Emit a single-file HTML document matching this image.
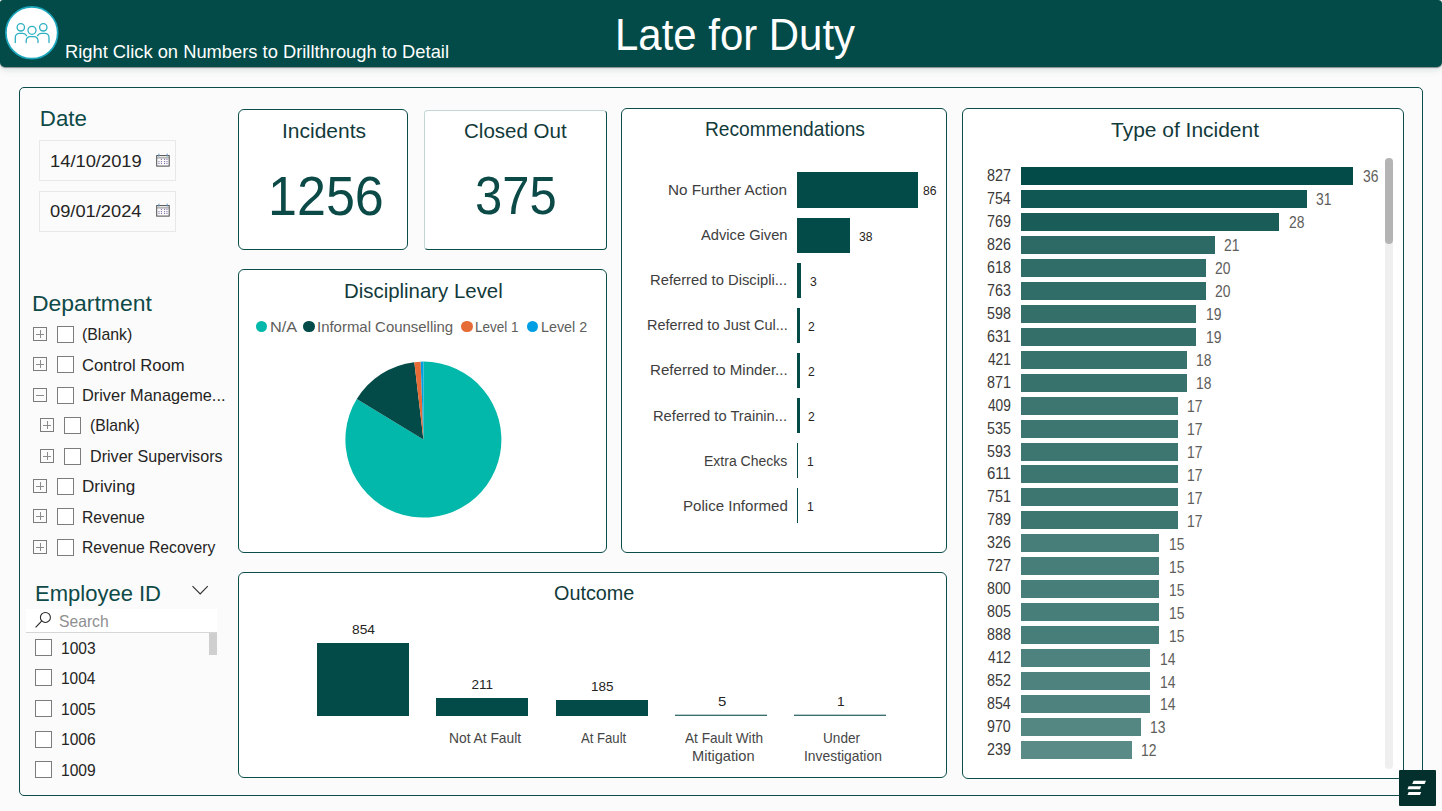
<!DOCTYPE html>
<html><head><meta charset="utf-8"><title>Late for Duty</title>
<style>
html,body{margin:0;padding:0;}
body{width:1442px;height:811px;position:relative;overflow:hidden;background:#FBFBFB;font-family:"Liberation Sans",sans-serif;}
.t{position:absolute;white-space:nowrap;}
</style></head><body>
<div style="position:absolute;left:0px;top:0px;width:1442px;height:67px;background:#024B48;border-radius:3px 4px 5px 5px;box-shadow:0 1px 1px rgba(30,30,30,0.45),0 3px 7px rgba(0,60,60,0.13);"></div>
<svg style="position:absolute;left:0;top:0" width="70" height="67"><circle cx="31.8" cy="32.8" r="25.9" fill="#fff" stroke="#1AA6BC" stroke-width="1.7"/><g fill="none" stroke="#2EAFC3" stroke-width="1.3" stroke-linecap="round"><circle cx="20.8" cy="27.3" r="3.7"/><circle cx="32" cy="30.3" r="4"/><circle cx="43.3" cy="27.3" r="3.7"/><path d="M15.3 42.6 V37.5 A4.2 4.2 0 0 1 19.5 33.3 H22.5 A4.2 4.2 0 0 1 26.5 35.6"/><path d="M26.2 42.6 V40.5 A3.9 3.9 0 0 1 30.1 36.6 H34.1 A3.9 3.9 0 0 1 38 40.5 V42.6"/><path d="M37.6 35.6 A4.2 4.2 0 0 1 41.6 33.3 H44.8 A4.2 4.2 0 0 1 49 37.5 V42.6"/></g></svg>
<div class="t" style="left:615.00px;top:14px;font-size:43.5px;line-height:43.5px;color:#ffffff;transform:scaleX(0.9639);transform-origin:0 0;">Late for Duty</div>
<div class="t" style="left:65.00px;top:43px;font-size:18.2px;line-height:18.2px;color:#ffffff;transform:scaleX(1.0076);transform-origin:0 0;">Right Click on Numbers to Drillthrough to Detail</div>
<div style="position:absolute;left:19px;top:87px;width:1404px;height:709px;box-sizing:border-box;border:1px solid #0A4D4A;border-radius:5px;background:#FBFBFB;"></div>
<div style="position:absolute;left:238px;top:109px;width:170px;height:141px;box-sizing:border-box;border:1px solid #0A4D4A;border-radius:6px;background:#fff;"></div>
<div style="position:absolute;left:424px;top:110px;width:183px;height:140px;box-sizing:border-box;border:1px solid #0A4D4A;border-radius:6px;background:#fff;border-top-color:#C3D6D4;border-left-color:#C3D6D4;border-radius:4px;"></div>
<div style="position:absolute;left:621px;top:108px;width:326px;height:445px;box-sizing:border-box;border:1px solid #0A4D4A;border-radius:6px;background:#fff;"></div>
<div style="position:absolute;left:962px;top:108px;width:442px;height:671px;box-sizing:border-box;border:1px solid #0A4D4A;border-radius:6px;background:#fff;"></div>
<div style="position:absolute;left:238px;top:269px;width:369px;height:284px;box-sizing:border-box;border:1px solid #0A4D4A;border-radius:6px;background:#fff;"></div>
<div style="position:absolute;left:238px;top:572px;width:709px;height:206px;box-sizing:border-box;border:1px solid #0A4D4A;border-radius:6px;background:#fff;"></div>
<div class="t" style="left:281.90px;top:122px;font-size:19.9px;line-height:19.9px;color:#123A3A;transform:scaleX(1.0561);transform-origin:0 0;">Incidents</div>
<div class="t" style="left:267.60px;top:168px;font-size:56px;line-height:56px;color:#0B4A47;transform:scaleX(0.9298);transform-origin:0 0;">1256</div>
<div class="t" style="left:464.20px;top:122px;font-size:19.9px;line-height:19.9px;color:#123A3A;transform:scaleX(1.0323);transform-origin:0 0;">Closed Out</div>
<div class="t" style="left:475.00px;top:169px;font-size:53.3px;line-height:53.3px;color:#0B4A47;transform:scaleX(0.9175);transform-origin:0 0;">375</div>
<div class="t" style="left:704.80px;top:120px;font-size:19.8px;line-height:19.8px;color:#123A3A;transform:scaleX(0.9695);transform-origin:0 0;">Recommendations</div>
<div class="t" style="left:1110.60px;top:120px;font-size:20.8px;line-height:20.8px;color:#123A3A;transform:scaleX(1.0079);transform-origin:0 0;">Type of Incident</div>
<div class="t" style="left:344.00px;top:281px;font-size:20.6px;line-height:20.6px;color:#123A3A;transform:scaleX(0.9905);transform-origin:0 0;">Disciplinary Level</div>
<div class="t" style="left:553.90px;top:583px;font-size:20px;line-height:20px;color:#123A3A;transform:scaleX(0.9901);transform-origin:0 0;">Outcome</div>
<div class="t" style="left:39.80px;top:108px;font-size:22.3px;line-height:22.3px;color:#0E4A48;">Date</div>
<div style="position:absolute;left:39px;top:140px;width:137px;height:41px;box-sizing:border-box;border:1px solid #E8E8E8;background:#FBFBFB;"></div>
<div class="t" style="left:49.50px;top:153px;font-size:16.3px;line-height:16.3px;color:#252423;transform:scaleX(1.1257);transform-origin:0 0;">14/10/2019</div>
<svg style="position:absolute;left:150px;top:148.0px" width="26" height="24"><rect x="6.7" y="7.6" width="12.5" height="10.5" fill="none" stroke="#4a4a4a" stroke-width="1"/><path d="M6.7 9.9H19.2" stroke="#8a8a8a" stroke-width="1"/><path d="M8.9 5.6V8.6M17.2 5.6V8.6" stroke="#6a9ac0" stroke-width="1"/><g fill="#8a7ab0"><rect x="10.9" y="10.9" width="1.1" height="1.1"/><rect x="14.0" y="10.9" width="1.1" height="1.1"/><rect x="16.4" y="10.9" width="1.1" height="1.1"/><rect x="8.4" y="13.0" width="1.1" height="1.1"/><rect x="10.9" y="13.0" width="1.1" height="1.1"/><rect x="14.0" y="13.0" width="1.1" height="1.1"/><rect x="16.4" y="13.0" width="1.1" height="1.1"/><rect x="8.4" y="14.9" width="1.1" height="1.1"/><rect x="10.9" y="14.9" width="1.1" height="1.1"/><rect x="14.0" y="14.9" width="1.1" height="1.1"/><rect x="16.4" y="14.9" width="1.1" height="1.1"/></g></svg>
<div style="position:absolute;left:39px;top:191px;width:137px;height:41px;box-sizing:border-box;border:1px solid #E8E8E8;background:#FBFBFB;"></div>
<div class="t" style="left:49.50px;top:203px;font-size:16.3px;line-height:16.3px;color:#252423;transform:scaleX(1.1223);transform-origin:0 0;">09/01/2024</div>
<svg style="position:absolute;left:150px;top:198.0px" width="26" height="24"><rect x="6.7" y="7.6" width="12.5" height="10.5" fill="none" stroke="#4a4a4a" stroke-width="1"/><path d="M6.7 9.9H19.2" stroke="#8a8a8a" stroke-width="1"/><path d="M8.9 5.6V8.6M17.2 5.6V8.6" stroke="#6a9ac0" stroke-width="1"/><g fill="#8a7ab0"><rect x="10.9" y="10.9" width="1.1" height="1.1"/><rect x="14.0" y="10.9" width="1.1" height="1.1"/><rect x="16.4" y="10.9" width="1.1" height="1.1"/><rect x="8.4" y="13.0" width="1.1" height="1.1"/><rect x="10.9" y="13.0" width="1.1" height="1.1"/><rect x="14.0" y="13.0" width="1.1" height="1.1"/><rect x="16.4" y="13.0" width="1.1" height="1.1"/><rect x="8.4" y="14.9" width="1.1" height="1.1"/><rect x="10.9" y="14.9" width="1.1" height="1.1"/><rect x="14.0" y="14.9" width="1.1" height="1.1"/><rect x="16.4" y="14.9" width="1.1" height="1.1"/></g></svg>
<div class="t" style="left:31.60px;top:293px;font-size:22.3px;line-height:22.3px;color:#0E4A48;transform:scaleX(1.0288);transform-origin:0 0;">Department</div>
<div style="position:absolute;left:33px;top:327px;width:14px;height:14px;box-sizing:border-box;border:1px solid #7C7C7C;"></div>
<div style="position:absolute;left:36px;top:334px;width:8px;height:1px;background:#8C8C8C;"></div>
<div style="position:absolute;left:40px;top:330px;width:1px;height:8px;background:#8C8C8C;"></div>
<div style="position:absolute;left:57px;top:326px;width:17px;height:17px;box-sizing:border-box;border:1px solid #7C7C7C;background:#fff;"></div>
<div class="t" style="left:82.30px;top:326px;font-size:17px;line-height:17px;color:#252423;transform:scaleX(0.9326);transform-origin:0 0;">(Blank)</div>
<div style="position:absolute;left:33px;top:357px;width:14px;height:14px;box-sizing:border-box;border:1px solid #7C7C7C;"></div>
<div style="position:absolute;left:36px;top:364px;width:8px;height:1px;background:#8C8C8C;"></div>
<div style="position:absolute;left:40px;top:360px;width:1px;height:8px;background:#8C8C8C;"></div>
<div style="position:absolute;left:57px;top:356px;width:17px;height:17px;box-sizing:border-box;border:1px solid #7C7C7C;background:#fff;"></div>
<div class="t" style="left:82.30px;top:357px;font-size:17px;line-height:17px;color:#252423;transform:scaleX(0.9790);transform-origin:0 0;">Control Room</div>
<div style="position:absolute;left:33px;top:388px;width:14px;height:14px;box-sizing:border-box;border:1px solid #7C7C7C;"></div>
<div style="position:absolute;left:36px;top:395px;width:8px;height:1px;background:#8C8C8C;"></div>
<div style="position:absolute;left:57px;top:387px;width:17px;height:17px;box-sizing:border-box;border:1px solid #7C7C7C;background:#fff;"></div>
<div class="t" style="left:82.30px;top:387px;font-size:17px;line-height:17px;color:#252423;transform:scaleX(0.9612);transform-origin:0 0;">Driver Manageme...</div>
<div style="position:absolute;left:40px;top:418px;width:14px;height:14px;box-sizing:border-box;border:1px solid #7C7C7C;"></div>
<div style="position:absolute;left:43px;top:425px;width:8px;height:1px;background:#8C8C8C;"></div>
<div style="position:absolute;left:47px;top:421px;width:1px;height:8px;background:#8C8C8C;"></div>
<div style="position:absolute;left:64px;top:417px;width:17px;height:17px;box-sizing:border-box;border:1px solid #7C7C7C;background:#fff;"></div>
<div class="t" style="left:89.60px;top:417px;font-size:17px;line-height:17px;color:#252423;transform:scaleX(0.9246);transform-origin:0 0;">(Blank)</div>
<div style="position:absolute;left:40px;top:449px;width:14px;height:14px;box-sizing:border-box;border:1px solid #7C7C7C;"></div>
<div style="position:absolute;left:43px;top:456px;width:8px;height:1px;background:#8C8C8C;"></div>
<div style="position:absolute;left:47px;top:452px;width:1px;height:8px;background:#8C8C8C;"></div>
<div style="position:absolute;left:64px;top:448px;width:17px;height:17px;box-sizing:border-box;border:1px solid #7C7C7C;background:#fff;"></div>
<div class="t" style="left:89.60px;top:448px;font-size:17px;line-height:17px;color:#252423;transform:scaleX(0.9482);transform-origin:0 0;">Driver Supervisors</div>
<div style="position:absolute;left:33px;top:479px;width:14px;height:14px;box-sizing:border-box;border:1px solid #7C7C7C;"></div>
<div style="position:absolute;left:36px;top:486px;width:8px;height:1px;background:#8C8C8C;"></div>
<div style="position:absolute;left:40px;top:482px;width:1px;height:8px;background:#8C8C8C;"></div>
<div style="position:absolute;left:57px;top:478px;width:17px;height:17px;box-sizing:border-box;border:1px solid #7C7C7C;background:#fff;"></div>
<div class="t" style="left:82.30px;top:478px;font-size:17px;line-height:17px;color:#252423;transform:scaleX(1.0049);transform-origin:0 0;">Driving</div>
<div style="position:absolute;left:33px;top:509px;width:14px;height:14px;box-sizing:border-box;border:1px solid #7C7C7C;"></div>
<div style="position:absolute;left:36px;top:516px;width:8px;height:1px;background:#8C8C8C;"></div>
<div style="position:absolute;left:40px;top:512px;width:1px;height:8px;background:#8C8C8C;"></div>
<div style="position:absolute;left:57px;top:508px;width:17px;height:17px;box-sizing:border-box;border:1px solid #7C7C7C;background:#fff;"></div>
<div class="t" style="left:82.30px;top:509px;font-size:17px;line-height:17px;color:#252423;transform:scaleX(0.9224);transform-origin:0 0;">Revenue</div>
<div style="position:absolute;left:33px;top:540px;width:14px;height:14px;box-sizing:border-box;border:1px solid #7C7C7C;"></div>
<div style="position:absolute;left:36px;top:547px;width:8px;height:1px;background:#8C8C8C;"></div>
<div style="position:absolute;left:40px;top:543px;width:1px;height:8px;background:#8C8C8C;"></div>
<div style="position:absolute;left:57px;top:539px;width:17px;height:17px;box-sizing:border-box;border:1px solid #7C7C7C;background:#fff;"></div>
<div class="t" style="left:82.30px;top:539px;font-size:17px;line-height:17px;color:#252423;transform:scaleX(0.9214);transform-origin:0 0;">Revenue Recovery</div>
<div class="t" style="left:34.60px;top:583px;font-size:22.3px;line-height:22.3px;color:#0E4A48;transform:scaleX(0.9871);transform-origin:0 0;">Employee ID</div>
<svg style="position:absolute;left:190px;top:583px" width="22" height="14"><path d="M2.5 3.1 L10.2 10.9 L17.8 3.1" fill="none" stroke="#2E2E2E" stroke-width="1.1"/></svg>
<div style="position:absolute;left:26px;top:609px;width:191px;height:23px;background:#fff;border-bottom:1.5px solid #D6D6D6;"></div>
<svg style="position:absolute;left:34px;top:611px" width="18" height="18"><circle cx="11.4" cy="6.4" r="5" fill="none" stroke="#252423" stroke-width="1.05"/><path d="M7.6 10.1 L1.6 16.4" stroke="#252423" stroke-width="1.1"/></svg>
<div class="t" style="left:59.00px;top:613px;font-size:16.5px;line-height:16.5px;color:#8F8F8F;transform:scaleX(0.9504);transform-origin:0 0;">Search</div>
<div style="position:absolute;left:209px;top:633px;width:8px;height:22px;background:#CFCFCF;"></div>
<div style="position:absolute;left:35px;top:639px;width:17px;height:17px;box-sizing:border-box;border:1px solid #7C7C7C;background:#fff;"></div>
<div class="t" style="left:61.00px;top:640px;font-size:17px;line-height:17px;color:#252423;transform:scaleX(0.9162);transform-origin:0 0;">1003</div>
<div style="position:absolute;left:35px;top:669px;width:17px;height:17px;box-sizing:border-box;border:1px solid #7C7C7C;background:#fff;"></div>
<div class="t" style="left:61.00px;top:670px;font-size:17px;line-height:17px;color:#252423;transform:scaleX(0.9120);transform-origin:0 0;">1004</div>
<div style="position:absolute;left:35px;top:700px;width:17px;height:17px;box-sizing:border-box;border:1px solid #7C7C7C;background:#fff;"></div>
<div class="t" style="left:61.00px;top:701px;font-size:17px;line-height:17px;color:#252423;transform:scaleX(0.9162);transform-origin:0 0;">1005</div>
<div style="position:absolute;left:35px;top:731px;width:17px;height:17px;box-sizing:border-box;border:1px solid #7C7C7C;background:#fff;"></div>
<div class="t" style="left:61.00px;top:731px;font-size:17px;line-height:17px;color:#252423;transform:scaleX(0.9162);transform-origin:0 0;">1006</div>
<div style="position:absolute;left:35px;top:761px;width:17px;height:17px;box-sizing:border-box;border:1px solid #7C7C7C;background:#fff;"></div>
<div class="t" style="left:61.00px;top:762px;font-size:17px;line-height:17px;color:#252423;transform:scaleX(0.9183);transform-origin:0 0;">1009</div>
<div style="position:absolute;left:256.0px;top:321.0px;width:11.4px;height:11.4px;border-radius:50%;background:#01B8AA"></div>
<div class="t" style="left:269.50px;top:320px;font-size:14.5px;line-height:14.5px;color:#605E5C;transform:scaleX(1.1222);transform-origin:0 0;">N/A</div>
<div style="position:absolute;left:303.3px;top:321.0px;width:11.4px;height:11.4px;border-radius:50%;background:#024B48"></div>
<div class="t" style="left:316.70px;top:320px;font-size:14.5px;line-height:14.5px;color:#605E5C;transform:scaleX(1.0303);transform-origin:0 0;">Informal Counselling</div>
<div style="position:absolute;left:461.3px;top:321.0px;width:11.4px;height:11.4px;border-radius:50%;background:#E66C37"></div>
<div class="t" style="left:475.00px;top:320px;font-size:14.5px;line-height:14.5px;color:#605E5C;transform:scaleX(0.9327);transform-origin:0 0;">Level 1</div>
<div style="position:absolute;left:526.6px;top:321.0px;width:11.4px;height:11.4px;border-radius:50%;background:#009FE3"></div>
<div class="t" style="left:540.50px;top:320px;font-size:14.5px;line-height:14.5px;color:#605E5C;transform:scaleX(0.9869);transform-origin:0 0;">Level 2</div>
<svg style="position:absolute;left:0;top:0" width="1442" height="811"><path d="M423.4,439.6 L423.40,361.60 A78,78 0 1 1 356.75,399.08 Z" fill="#01B8AA"/><path d="M423.4,439.6 L356.75,399.08 A78,78 0 0 1 414.30,362.13 Z" fill="#024B48"/><path d="M423.4,439.6 L414.30,362.13 A78,78 0 0 1 420.68,361.65 Z" fill="#E66C37"/><path d="M423.4,439.6 L420.68,361.65 A78,78 0 0 1 423.40,361.60 Z" fill="#009FE3"/></svg>
<div style="position:absolute;left:797px;top:172.4px;width:120.83px;height:35.3px;background:#024B48;"></div>
<div class="t" style="left:667.80px;top:182px;font-size:15.4px;line-height:15.4px;color:#3E3E3E;transform:scaleX(0.9932);transform-origin:0 0;">No Further Action</div>
<div class="t" style="left:922.50px;top:184px;font-size:13.5px;line-height:13.5px;color:#252423;transform:scaleX(0.9000);transform-origin:0 0;">86</div>
<div style="position:absolute;left:797px;top:217.5px;width:53.39px;height:35.3px;background:#024B48;"></div>
<div class="t" style="left:701.00px;top:227px;font-size:15.4px;line-height:15.4px;color:#3E3E3E;transform:scaleX(0.9543);transform-origin:0 0;">Advice Given</div>
<div class="t" style="left:858.99px;top:230px;font-size:13.5px;line-height:13.5px;color:#252423;transform:scaleX(0.9000);transform-origin:0 0;">38</div>
<div style="position:absolute;left:797px;top:262.6px;width:4.21px;height:35.3px;background:#024B48;"></div>
<div class="t" style="left:650.40px;top:272px;font-size:15.4px;line-height:15.4px;color:#3E3E3E;transform:scaleX(0.9596);transform-origin:0 0;">Referred to Discipli...</div>
<div class="t" style="left:809.82px;top:275px;font-size:13.5px;line-height:13.5px;color:#252423;transform:scaleX(0.9000);transform-origin:0 0;">3</div>
<div style="position:absolute;left:797px;top:307.7px;width:2.81px;height:35.3px;background:#024B48;"></div>
<div class="t" style="left:646.50px;top:317px;font-size:15.4px;line-height:15.4px;color:#3E3E3E;transform:scaleX(0.9409);transform-origin:0 0;">Referred to Just Cul...</div>
<div class="t" style="left:808.41px;top:320px;font-size:13.5px;line-height:13.5px;color:#252423;transform:scaleX(0.9000);transform-origin:0 0;">2</div>
<div style="position:absolute;left:797px;top:352.8px;width:2.81px;height:35.3px;background:#024B48;"></div>
<div class="t" style="left:649.60px;top:362px;font-size:15.4px;line-height:15.4px;color:#3E3E3E;transform:scaleX(0.9814);transform-origin:0 0;">Referred to Minder...</div>
<div class="t" style="left:808.41px;top:365px;font-size:13.5px;line-height:13.5px;color:#252423;transform:scaleX(0.9000);transform-origin:0 0;">2</div>
<div style="position:absolute;left:797px;top:397.9px;width:2.81px;height:35.3px;background:#024B48;"></div>
<div class="t" style="left:653.40px;top:408px;font-size:15.4px;line-height:15.4px;color:#3E3E3E;transform:scaleX(0.9555);transform-origin:0 0;">Referred to Trainin...</div>
<div class="t" style="left:808.41px;top:410px;font-size:13.5px;line-height:13.5px;color:#252423;transform:scaleX(0.9000);transform-origin:0 0;">2</div>
<div style="position:absolute;left:797px;top:443.0px;width:1.41px;height:35.3px;background:#024B48;"></div>
<div class="t" style="left:703.90px;top:453px;font-size:15.4px;line-height:15.4px;color:#3E3E3E;transform:scaleX(0.9100);transform-origin:0 0;">Extra Checks</div>
<div class="t" style="left:807.00px;top:455px;font-size:13.5px;line-height:13.5px;color:#252423;transform:scaleX(0.9000);transform-origin:0 0;">1</div>
<div style="position:absolute;left:797px;top:488.1px;width:1.41px;height:35.3px;background:#024B48;"></div>
<div class="t" style="left:682.90px;top:498px;font-size:15.4px;line-height:15.4px;color:#3E3E3E;transform:scaleX(0.9799);transform-origin:0 0;">Police Informed</div>
<div class="t" style="left:807.00px;top:500px;font-size:13.5px;line-height:13.5px;color:#252423;transform:scaleX(0.9000);transform-origin:0 0;">1</div>
<div style="position:absolute;left:1021px;top:167.00px;width:332.10px;height:18px;background:rgb(2, 75, 72);"></div>
<div class="t" style="left:986.80px;top:168px;font-size:16px;line-height:16px;color:#3B3A39;transform:scaleX(0.8985);transform-origin:0 0;">827</div>
<div class="t" style="left:1362.50px;top:169px;font-size:15.8px;line-height:15.8px;color:#605E5C;transform:scaleX(0.8800);transform-origin:0 0;">36</div>
<div style="position:absolute;left:1021px;top:189.96px;width:285.97px;height:18px;background:rgb(16, 86, 82);"></div>
<div class="t" style="left:986.80px;top:191px;font-size:16px;line-height:16px;color:#3B3A39;transform:scaleX(0.8875);transform-origin:0 0;">754</div>
<div class="t" style="left:1316.38px;top:192px;font-size:15.8px;line-height:15.8px;color:#605E5C;transform:scaleX(0.8800);transform-origin:0 0;">31</div>
<div style="position:absolute;left:1021px;top:212.92px;width:258.30px;height:18px;background:rgb(26, 92, 88);"></div>
<div class="t" style="left:986.80px;top:214px;font-size:16px;line-height:16px;color:#3B3A39;transform:scaleX(0.8957);transform-origin:0 0;">769</div>
<div class="t" style="left:1288.70px;top:215px;font-size:15.8px;line-height:15.8px;color:#605E5C;transform:scaleX(0.8800);transform-origin:0 0;">28</div>
<div style="position:absolute;left:1021px;top:235.88px;width:193.72px;height:18px;background:rgb(45, 106, 102);"></div>
<div class="t" style="left:986.80px;top:237px;font-size:16px;line-height:16px;color:#3B3A39;transform:scaleX(0.8929);transform-origin:0 0;">826</div>
<div class="t" style="left:1224.12px;top:238px;font-size:15.8px;line-height:15.8px;color:#605E5C;transform:scaleX(0.8800);transform-origin:0 0;">21</div>
<div style="position:absolute;left:1021px;top:258.84px;width:184.50px;height:18px;background:rgb(49, 109, 104);"></div>
<div class="t" style="left:986.80px;top:260px;font-size:16px;line-height:16px;color:#3B3A39;transform:scaleX(0.8929);transform-origin:0 0;">618</div>
<div class="t" style="left:1214.90px;top:261px;font-size:15.8px;line-height:15.8px;color:#605E5C;transform:scaleX(0.8800);transform-origin:0 0;">20</div>
<div style="position:absolute;left:1021px;top:281.80px;width:184.50px;height:18px;background:rgb(49, 109, 104);"></div>
<div class="t" style="left:986.80px;top:283px;font-size:16px;line-height:16px;color:#3B3A39;transform:scaleX(0.8929);transform-origin:0 0;">763</div>
<div class="t" style="left:1214.90px;top:284px;font-size:15.8px;line-height:15.8px;color:#605E5C;transform:scaleX(0.8800);transform-origin:0 0;">20</div>
<div style="position:absolute;left:1021px;top:304.76px;width:175.28px;height:18px;background:rgb(52, 111, 106);"></div>
<div class="t" style="left:986.80px;top:306px;font-size:16px;line-height:16px;color:#3B3A39;transform:scaleX(0.8929);transform-origin:0 0;">598</div>
<div class="t" style="left:1205.68px;top:307px;font-size:15.8px;line-height:15.8px;color:#605E5C;transform:scaleX(0.8800);transform-origin:0 0;">19</div>
<div style="position:absolute;left:1021px;top:327.72px;width:175.28px;height:18px;background:rgb(52, 111, 106);"></div>
<div class="t" style="left:986.80px;top:329px;font-size:16px;line-height:16px;color:#3B3A39;transform:scaleX(0.8957);transform-origin:0 0;">631</div>
<div class="t" style="left:1205.68px;top:330px;font-size:15.8px;line-height:15.8px;color:#605E5C;transform:scaleX(0.8800);transform-origin:0 0;">19</div>
<div style="position:absolute;left:1021px;top:350.68px;width:166.05px;height:18px;background:rgb(56, 114, 108);"></div>
<div class="t" style="left:987.80px;top:352px;font-size:16px;line-height:16px;color:#3B3A39;transform:scaleX(0.8567);transform-origin:0 0;">421</div>
<div class="t" style="left:1196.45px;top:353px;font-size:15.8px;line-height:15.8px;color:#605E5C;transform:scaleX(0.8800);transform-origin:0 0;">18</div>
<div style="position:absolute;left:1021px;top:373.64px;width:166.05px;height:18px;background:rgb(56, 114, 108);"></div>
<div class="t" style="left:986.80px;top:375px;font-size:16px;line-height:16px;color:#3B3A39;transform:scaleX(0.8957);transform-origin:0 0;">871</div>
<div class="t" style="left:1196.45px;top:376px;font-size:15.8px;line-height:15.8px;color:#605E5C;transform:scaleX(0.8800);transform-origin:0 0;">18</div>
<div style="position:absolute;left:1021px;top:396.60px;width:156.82px;height:18px;background:rgb(61, 118, 113);"></div>
<div class="t" style="left:987.80px;top:398px;font-size:16px;line-height:16px;color:#3B3A39;transform:scaleX(0.8567);transform-origin:0 0;">409</div>
<div class="t" style="left:1187.23px;top:399px;font-size:15.8px;line-height:15.8px;color:#605E5C;transform:scaleX(0.8800);transform-origin:0 0;">17</div>
<div style="position:absolute;left:1021px;top:419.56px;width:156.82px;height:18px;background:rgb(61, 118, 113);"></div>
<div class="t" style="left:986.80px;top:421px;font-size:16px;line-height:16px;color:#3B3A39;transform:scaleX(0.8929);transform-origin:0 0;">535</div>
<div class="t" style="left:1187.23px;top:422px;font-size:15.8px;line-height:15.8px;color:#605E5C;transform:scaleX(0.8800);transform-origin:0 0;">17</div>
<div style="position:absolute;left:1021px;top:442.52px;width:156.82px;height:18px;background:rgb(61, 118, 113);"></div>
<div class="t" style="left:986.80px;top:444px;font-size:16px;line-height:16px;color:#3B3A39;transform:scaleX(0.8929);transform-origin:0 0;">593</div>
<div class="t" style="left:1187.23px;top:445px;font-size:15.8px;line-height:15.8px;color:#605E5C;transform:scaleX(0.8800);transform-origin:0 0;">17</div>
<div style="position:absolute;left:1021px;top:465.48px;width:156.82px;height:18px;background:rgb(61, 118, 113);"></div>
<div class="t" style="left:986.80px;top:466px;font-size:16px;line-height:16px;color:#3B3A39;transform:scaleX(0.9361);transform-origin:0 0;">611</div>
<div class="t" style="left:1187.23px;top:468px;font-size:15.8px;line-height:15.8px;color:#605E5C;transform:scaleX(0.8800);transform-origin:0 0;">17</div>
<div style="position:absolute;left:1021px;top:488.44px;width:156.82px;height:18px;background:rgb(61, 118, 113);"></div>
<div class="t" style="left:986.80px;top:489px;font-size:16px;line-height:16px;color:#3B3A39;transform:scaleX(0.8957);transform-origin:0 0;">751</div>
<div class="t" style="left:1187.23px;top:491px;font-size:15.8px;line-height:15.8px;color:#605E5C;transform:scaleX(0.8800);transform-origin:0 0;">17</div>
<div style="position:absolute;left:1021px;top:511.40px;width:156.82px;height:18px;background:rgb(61, 118, 113);"></div>
<div class="t" style="left:986.80px;top:512px;font-size:16px;line-height:16px;color:#3B3A39;transform:scaleX(0.8957);transform-origin:0 0;">789</div>
<div class="t" style="left:1187.23px;top:514px;font-size:15.8px;line-height:15.8px;color:#605E5C;transform:scaleX(0.8800);transform-origin:0 0;">17</div>
<div style="position:absolute;left:1021px;top:534.36px;width:138.38px;height:18px;background:rgb(72, 126, 122);"></div>
<div class="t" style="left:986.80px;top:535px;font-size:16px;line-height:16px;color:#3B3A39;transform:scaleX(0.8929);transform-origin:0 0;">326</div>
<div class="t" style="left:1168.78px;top:537px;font-size:15.8px;line-height:15.8px;color:#605E5C;transform:scaleX(0.8800);transform-origin:0 0;">15</div>
<div style="position:absolute;left:1021px;top:557.32px;width:138.38px;height:18px;background:rgb(72, 126, 122);"></div>
<div class="t" style="left:986.80px;top:558px;font-size:16px;line-height:16px;color:#3B3A39;transform:scaleX(0.8985);transform-origin:0 0;">727</div>
<div class="t" style="left:1168.78px;top:560px;font-size:15.8px;line-height:15.8px;color:#605E5C;transform:scaleX(0.8800);transform-origin:0 0;">15</div>
<div style="position:absolute;left:1021px;top:580.28px;width:138.38px;height:18px;background:rgb(72, 126, 122);"></div>
<div class="t" style="left:986.80px;top:581px;font-size:16px;line-height:16px;color:#3B3A39;transform:scaleX(0.8902);transform-origin:0 0;">800</div>
<div class="t" style="left:1168.78px;top:583px;font-size:15.8px;line-height:15.8px;color:#605E5C;transform:scaleX(0.8800);transform-origin:0 0;">15</div>
<div style="position:absolute;left:1021px;top:603.24px;width:138.38px;height:18px;background:rgb(72, 126, 122);"></div>
<div class="t" style="left:986.80px;top:604px;font-size:16px;line-height:16px;color:#3B3A39;transform:scaleX(0.8929);transform-origin:0 0;">805</div>
<div class="t" style="left:1168.78px;top:606px;font-size:15.8px;line-height:15.8px;color:#605E5C;transform:scaleX(0.8800);transform-origin:0 0;">15</div>
<div style="position:absolute;left:1021px;top:626.20px;width:138.38px;height:18px;background:rgb(72, 126, 122);"></div>
<div class="t" style="left:986.80px;top:627px;font-size:16px;line-height:16px;color:#3B3A39;transform:scaleX(0.8929);transform-origin:0 0;">888</div>
<div class="t" style="left:1168.78px;top:629px;font-size:15.8px;line-height:15.8px;color:#605E5C;transform:scaleX(0.8800);transform-origin:0 0;">15</div>
<div style="position:absolute;left:1021px;top:649.16px;width:129.15px;height:18px;background:rgb(78, 130, 126);"></div>
<div class="t" style="left:987.80px;top:650px;font-size:16px;line-height:16px;color:#3B3A39;transform:scaleX(0.8594);transform-origin:0 0;">412</div>
<div class="t" style="left:1159.55px;top:652px;font-size:15.8px;line-height:15.8px;color:#605E5C;transform:scaleX(0.8800);transform-origin:0 0;">14</div>
<div style="position:absolute;left:1021px;top:672.12px;width:129.15px;height:18px;background:rgb(78, 130, 126);"></div>
<div class="t" style="left:986.80px;top:673px;font-size:16px;line-height:16px;color:#3B3A39;transform:scaleX(0.8985);transform-origin:0 0;">852</div>
<div class="t" style="left:1159.55px;top:675px;font-size:15.8px;line-height:15.8px;color:#605E5C;transform:scaleX(0.8800);transform-origin:0 0;">14</div>
<div style="position:absolute;left:1021px;top:695.08px;width:129.15px;height:18px;background:rgb(78, 130, 126);"></div>
<div class="t" style="left:986.80px;top:696px;font-size:16px;line-height:16px;color:#3B3A39;transform:scaleX(0.8875);transform-origin:0 0;">854</div>
<div class="t" style="left:1159.55px;top:697px;font-size:15.8px;line-height:15.8px;color:#605E5C;transform:scaleX(0.8800);transform-origin:0 0;">14</div>
<div style="position:absolute;left:1021px;top:718.04px;width:119.92px;height:18px;background:rgb(84, 135, 130);"></div>
<div class="t" style="left:986.80px;top:719px;font-size:16px;line-height:16px;color:#3B3A39;transform:scaleX(0.8902);transform-origin:0 0;">970</div>
<div class="t" style="left:1150.33px;top:720px;font-size:15.8px;line-height:15.8px;color:#605E5C;transform:scaleX(0.8800);transform-origin:0 0;">13</div>
<div style="position:absolute;left:1021px;top:741.00px;width:110.70px;height:18px;background:rgb(90, 139, 134);"></div>
<div class="t" style="left:986.80px;top:742px;font-size:16px;line-height:16px;color:#3B3A39;transform:scaleX(0.8957);transform-origin:0 0;">239</div>
<div class="t" style="left:1141.10px;top:743px;font-size:15.8px;line-height:15.8px;color:#605E5C;transform:scaleX(0.8800);transform-origin:0 0;">12</div>
<div style="position:absolute;left:1385px;top:158px;width:8px;height:611px;background:#EFEFEF;border-radius:4px;"></div>
<div style="position:absolute;left:1385px;top:158px;width:8px;height:86px;background:#B4B4B4;border-radius:4px;"></div>
<div style="position:absolute;left:317.3px;top:643.30px;width:92px;height:72.30px;background:#024B48;"></div>
<div class="t" style="left:351.80px;top:623px;font-size:13.5px;line-height:13.5px;color:#252423;transform:scaleX(1.0181);transform-origin:0 0;">854</div>
<div style="position:absolute;left:436.4px;top:697.74px;width:92px;height:17.86px;background:#024B48;"></div>
<div class="t" style="left:471.40px;top:678px;font-size:13.5px;line-height:13.5px;color:#252423;">211</div>
<div class="t" style="left:448.50px;top:731px;font-size:14.2px;line-height:14.2px;color:#464646;transform:scaleX(0.9727);transform-origin:0 0;">Not At Fault</div>
<div style="position:absolute;left:555.5px;top:699.94px;width:92px;height:15.66px;background:#024B48;"></div>
<div class="t" style="left:590.90px;top:680px;font-size:13.5px;line-height:13.5px;color:#252423;">185</div>
<div class="t" style="left:581.20px;top:731px;font-size:14.2px;line-height:14.2px;color:#464646;transform:scaleX(0.9253);transform-origin:0 0;">At Fault</div>
<div style="position:absolute;left:674.6px;top:714px;width:92px;height:2px;background:linear-gradient(#B5CBCA 0 50%, #3A716E 50% 100%);"></div>
<div class="t" style="left:717.60px;top:695px;font-size:13.5px;line-height:13.5px;color:#252423;transform:scaleX(1.1058);transform-origin:0 0;">5</div>
<div class="t" style="left:684.60px;top:731px;font-size:14.2px;line-height:14.2px;color:#464646;transform:scaleX(0.9605);transform-origin:0 0;">At Fault With</div>
<div class="t" style="left:691.70px;top:749px;font-size:14.2px;line-height:14.2px;color:#464646;transform:scaleX(1.0297);transform-origin:0 0;">Mitigation</div>
<div style="position:absolute;left:793.7px;top:714px;width:92px;height:2px;background:linear-gradient(#B5CBCA 0 50%, #3A716E 50% 100%);"></div>
<div class="t" style="left:837.00px;top:695px;font-size:13.5px;line-height:13.5px;color:#252423;transform:scaleX(1.0200);transform-origin:0 0;">1</div>
<div class="t" style="left:823.40px;top:731px;font-size:14.2px;line-height:14.2px;color:#464646;transform:scaleX(0.9582);transform-origin:0 0;">Under</div>
<div class="t" style="left:803.60px;top:749px;font-size:14.2px;line-height:14.2px;color:#464646;transform:scaleX(0.9772);transform-origin:0 0;">Investigation</div>
<div style="position:absolute;left:1399px;top:770px;width:37px;height:36px;background:#03302D;border-radius:1px;"></div>
<svg style="position:absolute;left:1399px;top:770px" width="37" height="36"><g fill="#fff"><path d="M14.6 10.7 H27 L25.6 14 H13.2 Z"/><path d="M9.6 16.3 H22.2 L21 19.3 H8.5 Z"/><path d="M9.6 22 H22.2 L21 25 H8.5 Z"/></g></svg>
</body></html>
